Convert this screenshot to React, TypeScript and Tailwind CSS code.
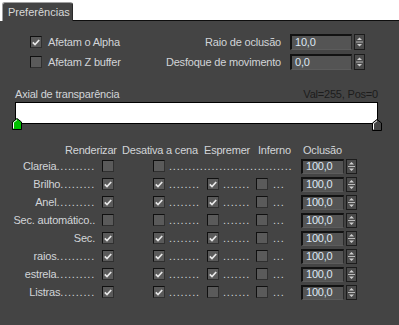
import React from "react";

type Row = {
  label: string;
  dots: string;
  render: boolean;
  scene: boolean;
  squeeze?: boolean;
  inferno?: boolean;
  wide?: boolean;
};

const rows: Row[] = [
  { label: "Clareia", dots: "..........", render: false, scene: false, wide: true },
  { label: "Brilho", dots: ".........", render: true, scene: true, squeeze: true, inferno: false },
  { label: "Anel", dots: "..........", render: true, scene: true, squeeze: true, inferno: false },
  { label: "Sec. automático..", dots: "", render: false, scene: false, squeeze: false, inferno: false },
  { label: "Sec.", dots: "", render: true, scene: true, squeeze: true, inferno: false },
  { label: "raios", dots: "..........", render: true, scene: true, squeeze: true, inferno: false },
  { label: "estrela", dots: "..........", render: true, scene: true, squeeze: true, inferno: false },
  { label: "Listras", dots: ".........", render: true, scene: true, squeeze: false, inferno: false },
];

function Check({ on, className = "" }: { on: boolean; className?: string }) {
  return (
    <span
      className={`w-[12px] h-[12px] shrink-0 flex items-center justify-center bg-[#5a5a5a] border border-t-[#101010] border-l-[#101010] border-r-[#303030] border-b-[#303030] ${className}`}
    >
      {on && (
        <svg width="8" height="7" viewBox="0 0 8 7">
          <path d="M0.8 3.4 L3 5.6 L7.2 1" stroke="#e8e8e8" strokeWidth="1.7" fill="none" />
        </svg>
      )}
    </span>
  );
}

function Spinner({ h }: { h: number }) {
  return (
    <svg width="11" height={h} viewBox={`0 0 11 ${h}`} className="ml-[2px] shrink-0">
      <rect x="0.5" y="0.5" width="10" height={h - 1} fill="#4a4a4a" stroke="#1c1c1c" />
      <polygon points={`3,${h / 2 - 2} 5.5,${h / 2 - 4.5} 8,${h / 2 - 2}`} fill="#cfcfcf" />
      <line x1="2" x2="9" y1={h / 2} y2={h / 2} stroke="#b8b8b8" />
      <polygon points={`3,${h / 2 + 2} 8,${h / 2 + 2} 5.5,${h / 2 + 4.5}`} fill="#cfcfcf" />
    </svg>
  );
}

function Field({ value, w, h }: { value: string; w: string; h: string }) {
  return (
    <span
      className={`${w} ${h} shrink-0 flex items-center pl-[3px] bg-[#545454] text-[#dde7f3] border-t-2 border-l-2 border-r border-b border-t-[#121212] border-l-[#121212] border-r-[#2c2c2c] border-b-[#5c5c5c]`}
    >
      {value}
    </span>
  );
}

function Marker({ fill }: { fill: string }) {
  return (
    <svg width="10" height="12" viewBox="0 0 10 12">
      <polygon points="0.5,11.5 0.5,4 5,0.5 9.5,4 9.5,11.5" fill={fill} stroke="#000" />
      <polyline points="1.5,10.5 1.5,4.5 5,1.8" fill="none" stroke="#fff" />
    </svg>
  );
}

export default function App() {
  return (
    <div className="w-[399px] h-[325px] flex flex-col overflow-hidden bg-white font-['Liberation_Sans',Arial,sans-serif] text-[11px] leading-[13px] tracking-[-0.2px] text-[#d2d4d8]">
      <div className="flex items-end h-[21px] shrink-0">
        <div className="w-[2px] h-full border-b border-transparent" />
        <div className="w-[71px] h-[19px] bg-[#444] border-t border-l border-r border-t-[#a0a0a0] border-l-[#a0a0a0] border-r-[#2a2a2a] rounded-t-[3px] pl-[5px] pt-[3px] tracking-normal text-[#d8d8d8]">
          Preferências
        </div>
        <div className="flex-1 h-full border-b border-[#0e0e0e]" />
      </div>

      <div className="flex-1 bg-[#444] flex flex-col">
        <div className="pt-[11px] flex flex-col">
          <div className="flex items-center h-[20px]">
            <div className="w-[160px] pl-[30px] flex items-center gap-[6px]">
              <Check on={true} />
              <span>Afetam o Alpha</span>
            </div>
            <span className="w-[121px] text-right whitespace-nowrap">Raio de oclusão</span>
            <span className="ml-[9px] flex">
              <Field value="10,0" w="w-[62px]" h="h-[16px]" />
              <Spinner h={16} />
            </span>
          </div>
          <div className="flex items-center h-[20px]">
            <div className="w-[160px] pl-[30px] flex items-center gap-[6px]">
              <Check on={false} />
              <span>Afetam Z buffer</span>
            </div>
            <span className="w-[121px] text-right whitespace-nowrap">Desfoque de movimento</span>
            <span className="ml-[9px] flex">
              <Field value="0,0" w="w-[62px]" h="h-[16px]" />
              <Spinner h={16} />
            </span>
          </div>
        </div>

        <div className="mt-[16px] h-[13px] flex items-center justify-between pl-[15px] pr-[21px]">
          <span>Axial de transparência</span>
          <span className="text-[#1c1c1c]">Val=255, Pos=0</span>
        </div>
        <div className="mt-[1px] ml-[15px] w-[363px] h-[22px] bg-white border border-black relative">
          <span className="absolute left-[-4px] top-[15px] flex">
            <Marker fill="#00c000" />
          </span>
          <span className="absolute right-[-5px] top-[16px] flex">
            <Marker fill="#444444" />
          </span>
        </div>

        <div className="mt-[19px] h-[14px] flex items-center pl-[65px] whitespace-nowrap">
          <span className="w-[57px]">Renderizar</span>
          <span className="w-[82px]">Desativa a cena</span>
          <span className="w-[54px]">Espremer</span>
          <span className="w-[45px]">Inferno</span>
          <span>Oclusão</span>
        </div>

        <div className="flex flex-col">
          {rows.map((r) => (
            <div key={r.label} className="flex items-center h-[18px] whitespace-nowrap">
              <span className="w-[95px] text-right">
                {r.label}
                <span className="tracking-[0.8px]">{r.dots}</span>
              </span>
              <Check on={r.render} className="ml-[7px]" />
              <Check on={r.scene} className="ml-[39px]" />
              {r.wide ? (
                <span className="ml-[4px] w-[132px] overflow-hidden tracking-[0.8px]">
                  ................................
                </span>
              ) : (
                <>
                  <span className="ml-[4px] w-[38px] overflow-hidden tracking-[0.8px]">........</span>
                  <Check on={!!r.squeeze} />
                  <span className="ml-[4px] w-[33px] overflow-hidden tracking-[0.8px]">.......</span>
                  <Check on={!!r.inferno} />
                  <span className="ml-[5px] w-[28px] overflow-hidden tracking-[0.8px]">...</span>
                </>
              )}
              <Field value="100,0" w="w-[43px]" h="h-[15px]" />
              <Spinner h={15} />
            </div>
          ))}
        </div>
      </div>
    </div>
  );
}
